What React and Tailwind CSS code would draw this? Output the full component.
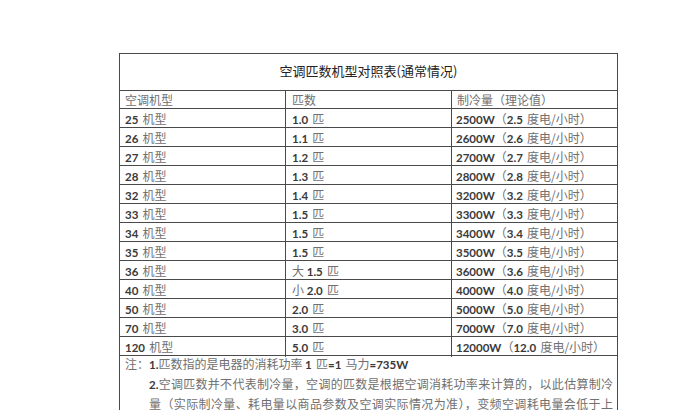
const rows = [
  ['25', '', '1.0', '2500W', '2.5'],
  ['26', '', '1.1', '2600W', '2.6'],
  ['27', '', '1.2', '2700W', '2.7'],
  ['28', '', '1.3', '2800W', '2.8'],
  ['32', '', '1.4', '3200W', '3.2'],
  ['33', '', '1.5', '3300W', '3.3'],
  ['34', '', '1.5', '3400W', '3.4'],
  ['35', '', '1.5', '3500W', '3.5'],
  ['36', '大', '1.5', '3600W', '3.6'],
  ['40', '小', '2.0', '4000W', '4.0'],
  ['50', '', '2.0', '5000W', '5.0'],
  ['70', '', '3.0', '7000W', '7.0'],
  ['120', '', '5.0', '12000W', '12.0'],
]

function Num({ children }) {
  return <span className="font-['Lato','Liberation_Sans',sans-serif] font-bold text-[11.5px] text-[#3a3a3a]">{children}</span>
}

function Cjk({ children }) {
  return <span className="font-['Noto_Sans_CJK_SC',sans-serif] text-[12px] text-[#707070]">{children}</span>
}

export default function App() {
  return (
    <div className="w-[675px] h-[410px] bg-white overflow-hidden">
      <div className="ml-[119px] mt-[53px] w-[499px] border-l border-r border-t border-[#4a4a4a]">
        <div className="h-[37px] border-b border-[#4a4a4a] flex items-center justify-center font-['Noto_Sans_CJK_SC',sans-serif] text-[13px] text-[#222] pb-[2px]">
          空调匹数机型对照表(通常情况)
        </div>

        <div className="grid grid-cols-[166px_166px_1fr] h-[18px] border-b border-[#4a4a4a] leading-[17px]">
          <div className="border-r border-[#4a4a4a] pl-[5px]"><Cjk>空调机型</Cjk></div>
          <div className="border-r border-[#4a4a4a] pl-[6px]"><Cjk>匹数</Cjk></div>
          <div className="pl-[5px]"><Cjk>制冷量（理论值）</Cjk></div>
        </div>

        {rows.map((r, i) => (
          <div key={i} className="grid grid-cols-[166px_166px_1fr] h-[19px] border-b border-[#4a4a4a] leading-[18px] whitespace-nowrap">
            <div className="border-r border-[#4a4a4a] pl-[5px]">
              <Num>{r[0]}</Num> <Cjk>机型</Cjk>
            </div>
            <div className="border-r border-[#4a4a4a] pl-[6px]">
              {r[1] && <Cjk>{r[1]} </Cjk>}<Num>{r[2]}</Num> <Cjk>匹</Cjk>
            </div>
            <div className="pl-[4px]">
              <Num>{r[3]}</Num><Cjk>（</Cjk><Num>{r[4]}</Num> <Cjk>度电/小时）</Cjk>
            </div>
          </div>
        ))}

        <div className="flex pl-[5px] -mt-[2px] leading-[19px] h-[60px]">
          <div className="w-[24px] shrink-0"><Cjk>注：</Cjk></div>
          <div className="w-[464px] whitespace-nowrap">
            <div>
              <Num>1.</Num><Cjk>匹数指的是电器的消耗功率 </Cjk><Num>1</Num> <Cjk>匹</Cjk><Num>=1</Num> <Cjk>马力</Cjk><Num>=735W</Num>
            </div>
            <div className="[text-align-last:justify] text-justify">
              <Num>2.</Num><Cjk>空调匹数并不代表制冷量，空调的匹数是根据空调消耗功率来计算的，以此估算制冷</Cjk>
            </div>
            <div className="[text-align-last:justify] text-justify">
              <Cjk>量（实际制冷量、耗电量以商品参数及空调实际情况为准），变频空调耗电量会低于上</Cjk>
            </div>
          </div>
        </div>
      </div>
    </div>
  )
}
